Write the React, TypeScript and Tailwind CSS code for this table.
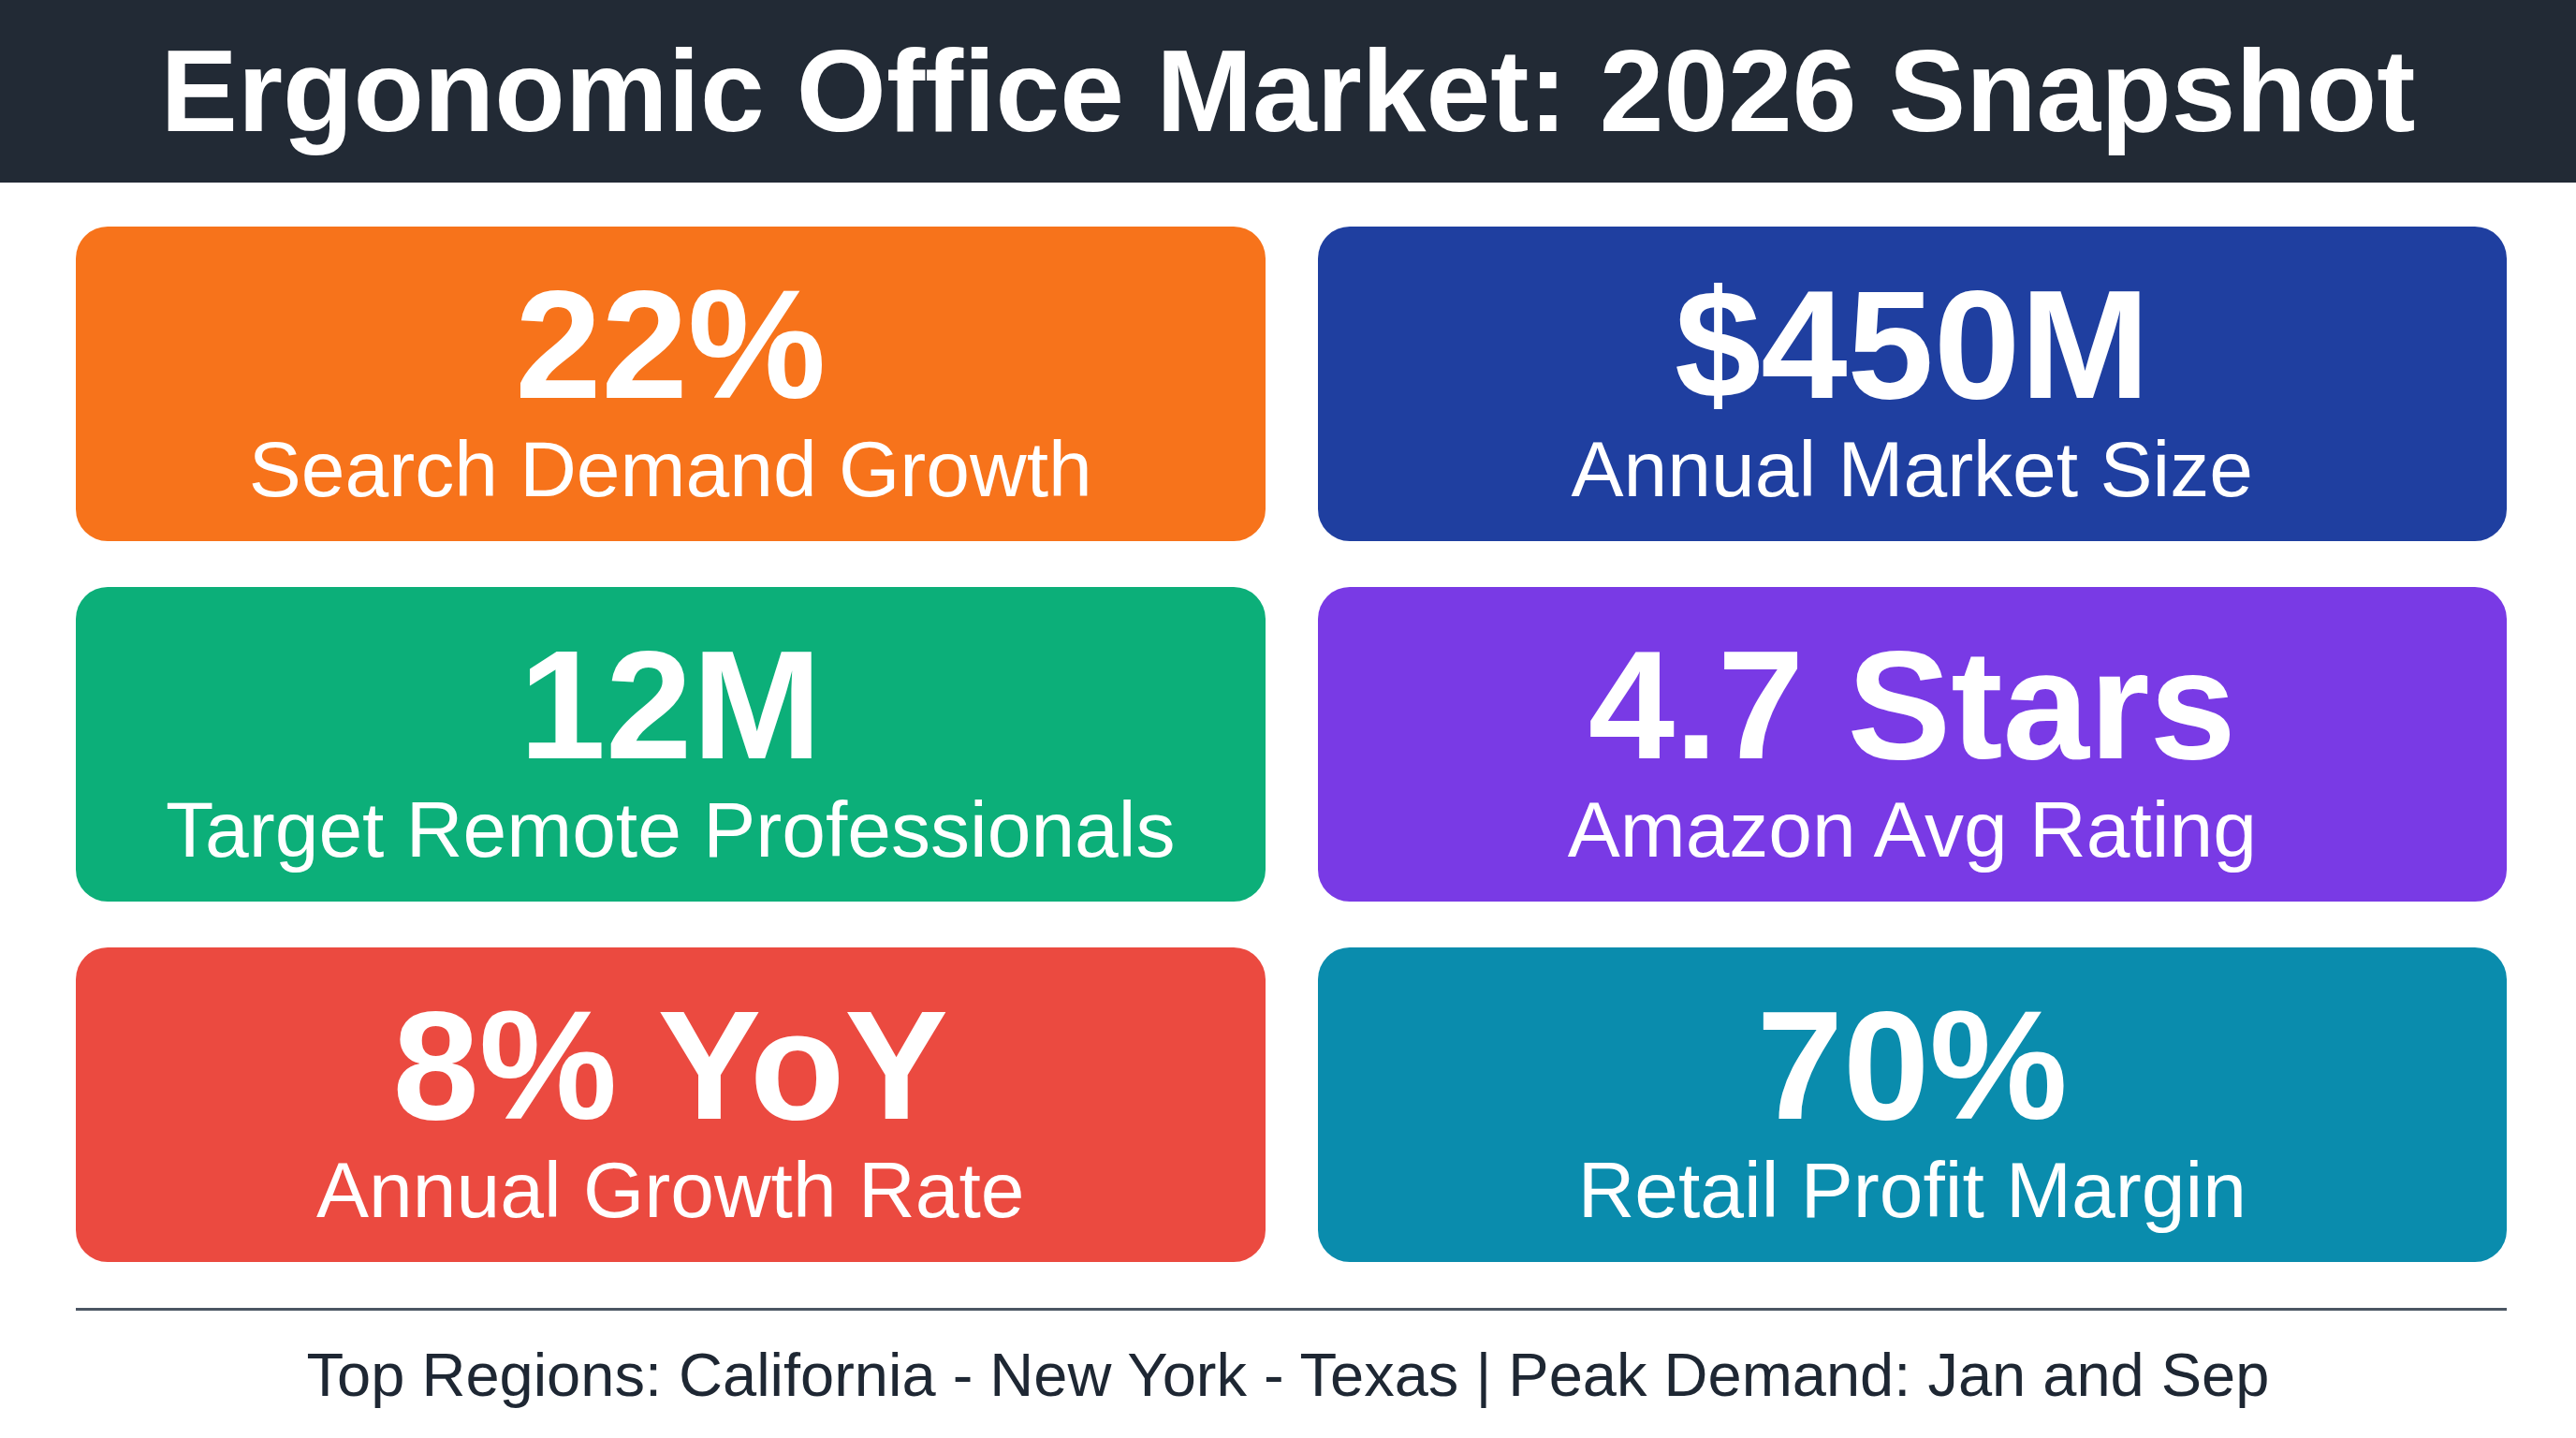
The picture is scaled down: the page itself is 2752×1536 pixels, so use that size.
type Stat = {
  value: string;
  label: string;
  color: string;
};

const stats: Stat[] = [
  { value: "22%", label: "Search Demand Growth", color: "bg-[#f7731b]" },
  { value: "$450M", label: "Annual Market Size", color: "bg-[#1f3fa0]" },
  { value: "12M", label: "Target Remote Professionals", color: "bg-[#0caf79]" },
  { value: "4.7 Stars", label: "Amazon Avg Rating", color: "bg-[#793ae5]" },
  { value: "8% YoY", label: "Annual Growth Rate", color: "bg-[#eb4a40]" },
  { value: "70%", label: "Retail Profit Margin", color: "bg-[#0a8cad]" },
];

function StatCard({ stat }: { stat: Stat }) {
  return (
    <div
      className={`${stat.color} h-[336px] rounded-[34px] flex flex-col items-center justify-center pt-[8px] text-white`}
    >
      <div className="text-[166px] font-bold leading-none">{stat.value}</div>
      <div className="mt-[8px] text-[84px] leading-none">{stat.label}</div>
    </div>
  );
}

export default function App() {
  return (
    <div className="w-[2752px] h-[1536px] bg-white flex flex-col font-['Liberation_Sans',Arial,sans-serif]">
      <header className="h-[195px] bg-[#222a35] flex items-center justify-center">
        <h1 className="text-[123.5px] font-bold leading-none text-white">
          Ergonomic Office Market: 2026 Snapshot
        </h1>
      </header>

      <main className="pt-[47px]">
        <div className="pl-[81px] pr-[74px]">
          <div className="grid grid-cols-2 gap-x-[56px] gap-y-[49px]">
            {stats.map((stat) => (
              <StatCard key={stat.label} stat={stat} />
            ))}
          </div>

          <div className="mt-[49px] h-[3px] bg-[#4b5563]" />
        </div>

        <p className="mt-[36px] text-center text-[65px] leading-none text-[#1e2733]">
          Top Regions: California - New York - Texas | Peak Demand: Jan and Sep
        </p>
      </main>
    </div>
  );
}
